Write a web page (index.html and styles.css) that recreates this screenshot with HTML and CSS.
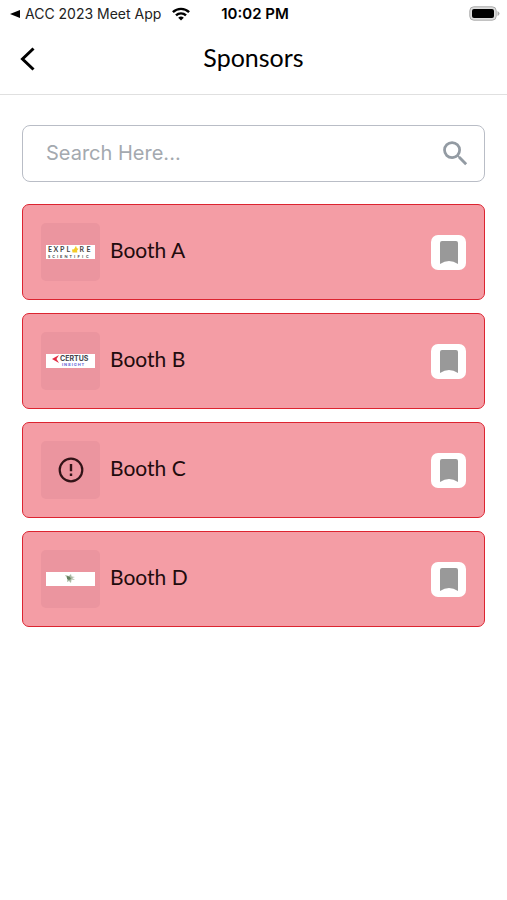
FILE: index.html
```html
<!DOCTYPE html>
<html lang="en">
<head>
<meta charset="utf-8">
<meta name="viewport" content="width=device-width, initial-scale=1">
<title>Sponsors</title>
<link rel="stylesheet" href="styles.css">
</head>
<body>
<div class="status">
  <a class="status-back" href="#">
    <svg width="10" height="8" viewBox="0 0 10 8" aria-hidden="true"><path d="M0 4 10 0v8z"/></svg>
    <span>ACC 2023 Meet App</span>
    <svg class="wifi" width="18" height="14" viewBox="0 0 18 14" aria-hidden="true"><g fill="none" stroke="#000" stroke-width="2.4"><path d="M.9 5.2a11.5 11.5 0 0 1 16.2 0"/><path d="M4 8.4a7.1 7.1 0 0 1 10 0"/></g><path d="M9 13.6 6.2 10.8a4 4 0 0 1 5.6 0z"/></svg>
  </a>
  <span class="time">10:02 PM</span>
  <svg class="battery" width="31" height="15" viewBox="0 0 31 15" aria-hidden="true"><rect x=".8" y=".8" width="26.4" height="13.4" rx="4" fill="#ddd" stroke="#aaa"/><rect x="3" y="3" width="22" height="9" rx="2"/><path d="M28.5 5v5q2-1 2-2.500t-2-2.500z" fill="#aaa"/></svg>
</div>
<header class="header">
  <button class="back" type="button" aria-label="Back"><svg width="16" height="26" viewBox="0 0 16 26"><path d="M13.500 2.500 2.500 13l11 10.500" fill="none" stroke="#000" stroke-width="3"/></svg></button>
  <h1>Sponsors</h1>
</header>
<main class="content">
  <form class="search">
    <input type="text" aria-label="Search sponsors" placeholder="Search Here...">
    <button type="submit" aria-label="Search"><svg width="33" height="33" viewBox="0 0 24 24"><path fill="#939ba3" d="M15.500 14h-.79l-.28-.27A6.470 6.470 0 0 0 16 9.500 6.500 6.500 0 1 0 9.500 16c1.610 0 3.090-.59 4.230-1.570l.27.28v.79l5 4.990L20.490 19zm-6 0a4.500 4.500 0 1 1 0-9 4.500 4.500 0 0 1 0 9z"/></svg></button>
  </form>
  <ul class="list">
    <li class="card">
      <div class="thumb"><svg width="49" height="14" viewBox="0 0 49 14"><path fill="#fff" d="M0 0h49v14H0z"/><g class="explore"><text x="2" y="7">E</text><text x="7.500" y="7">X</text><text x="14" y="7">P</text><text x="20.500" y="7">L</text><text x="33.500" y="7">R</text><text x="40.500" y="7">E</text></g><path fill="#f4cb27" d="m26.500 7.500-.5-3 2-.3L30 .8l.8 2.400 1.700.5-1.400 1.700.2 2.100z"/><g class="scientific"><text x="2" y="12.500">S</text><text x="6.300" y="12.500">C</text><text x="11" y="12.500">I</text><text x="14" y="12.500">E</text><text x="18.500" y="12.500">N</text><text x="23.500" y="12.500">T</text><text x="28" y="12.500">I</text><text x="31.500" y="12.500">F</text><text x="36" y="12.500">I</text><text x="40" y="12.500">C</text></g></svg></div>
      <h2>Booth A</h2>
      <button class="save" type="button" aria-label="Bookmark Booth A"><svg width="18" height="23" viewBox="0 0 18 23"><path d="M2 0h14q2 0 2 2v21q-9-6-18 0V2q0-2 2-2z"/></svg></button>
    </li>
    <li class="card">
      <div class="thumb"><svg width="49" height="14" viewBox="0 0 49 14"><path fill="#fff" d="M0 0h49v14H0z"/><path fill="#e22c43" d="m6 5 7-4-2.500 4L13 9z"/><text class="certus" x="14" y="7">CERTUS</text><text class="insight" x="16" y="12">I N S I G H T</text></svg></div>
      <h2>Booth B</h2>
      <button class="save" type="button" aria-label="Bookmark Booth B"><svg width="18" height="23" viewBox="0 0 18 23"><path d="M2 0h14q2 0 2 2v21q-9-6-18 0V2q0-2 2-2z"/></svg></button>
    </li>
    <li class="card">
      <div class="thumb"><svg width="26" height="26" viewBox="0 0 26 26"><circle cx="13" cy="13" r="11.300" fill="none" stroke="#321317" stroke-width="2.200"/><path fill="#321317" d="M11.800 7h2.400v7.300h-2.400zm0 9.500h2.400v2.400h-2.400z"/></svg></div>
      <h2>Booth C</h2>
      <button class="save" type="button" aria-label="Bookmark Booth C"><svg width="18" height="23" viewBox="0 0 18 23"><path d="M2 0h14q2 0 2 2v21q-9-6-18 0V2q0-2 2-2z"/></svg></button>
    </li>
    <li class="card">
      <div class="thumb"><svg width="49" height="14" viewBox="0 0 49 14"><path fill="#fff" d="M0 0h49v14H0z"/><path fill="#a9baa3" d="m19 3 4 1 2-2 .5 2.500L29 5l-3 1 3 2-3.500-.5L25 11l-2-2-2 1 .5-3z"/><path fill="#647f60" d="m21 4 3 1 1 2-2 1-2-1z"/></svg></div>
      <h2>Booth D</h2>
      <button class="save" type="button" aria-label="Bookmark Booth D"><svg width="18" height="23" viewBox="0 0 18 23"><path d="M2 0h14q2 0 2 2v21q-9-6-18 0V2q0-2 2-2z"/></svg></button>
    </li>
  </ul>
</main>
</body>
</html>
```
FILE: styles.css
```css
* { box-sizing: border-box; }
body { margin: 0; background: #fff; color: #000; font-family: Lato, sans-serif; }
svg { display: block; flex: none; }
button { padding: 0; border: 0; background: none; cursor: pointer; }

.status {
  display: grid;
  grid-template-columns: 1fr auto 1fr;
  align-items: center;
  height: 27px;
  padding: 0 7px 0 10px;
  font: 14px/20px Inter, sans-serif;
}
.status-back { display: flex; align-items: center; gap: 5px; color: #222; text-decoration: none; white-space: nowrap; }
.wifi { margin-left: 6px; }
.time { font-size: 15px; font-weight: 600; }
.battery { justify-self: end; }

.header {
  display: grid;
  grid-template-columns: 40px 1fr 40px;
  align-items: center;
  height: 68px;
  padding: 0 20px 4px;
  border-bottom: 1px solid #e0e0e0;
}
.header h1 { margin: 0; padding-bottom: 4px; text-align: center; font-size: 25px; line-height: 32px; font-weight: 400; }

.content { padding: 30px 22px; }
.search {
  display: flex;
  align-items: center;
  height: 57px;
  padding: 0 12px 0 23px;
  border: 1px solid #b9bdc6;
  border-radius: 8px;
}
.search input {
  flex: 1;
  min-width: 0;
  padding: 0 0 2px;
  border: 0;
  outline: 0;
  background: none;
  font: 20px/28px Inter, sans-serif;
}
.search input::placeholder { color: #a4a9af; opacity: 1; }

.list { display: grid; gap: 13px; margin: 22px 0 0; padding: 0; list-style: none; }
.card {
  display: flex;
  align-items: center;
  height: 96px;
  padding: 0 18px;
  border: 1px solid #dc2430;
  border-radius: 7px;
  background: #f49da5;
}
.thumb { display: grid; place-items: center; width: 59px; height: 58px; border-radius: 5px; background: #eb959f; }
.card h2 { flex: 1; margin: 0; padding: 0 10px 4px; color: #210b0d; font-size: 21px; line-height: 28px; font-weight: 400; }
.save { display: grid; place-items: center; width: 35px; height: 35px; border-radius: 7px; background: #fff; fill: #999; }

.explore { font: 700 7px Lato, sans-serif; fill: #444; }
.scientific { font: 700 4px Lato, sans-serif; fill: #444; }
.certus { font: 700 7px Inter, sans-serif; fill: #46464e; }
.insight { font: 700 4px Inter, sans-serif; fill: #6565d8; }
```
